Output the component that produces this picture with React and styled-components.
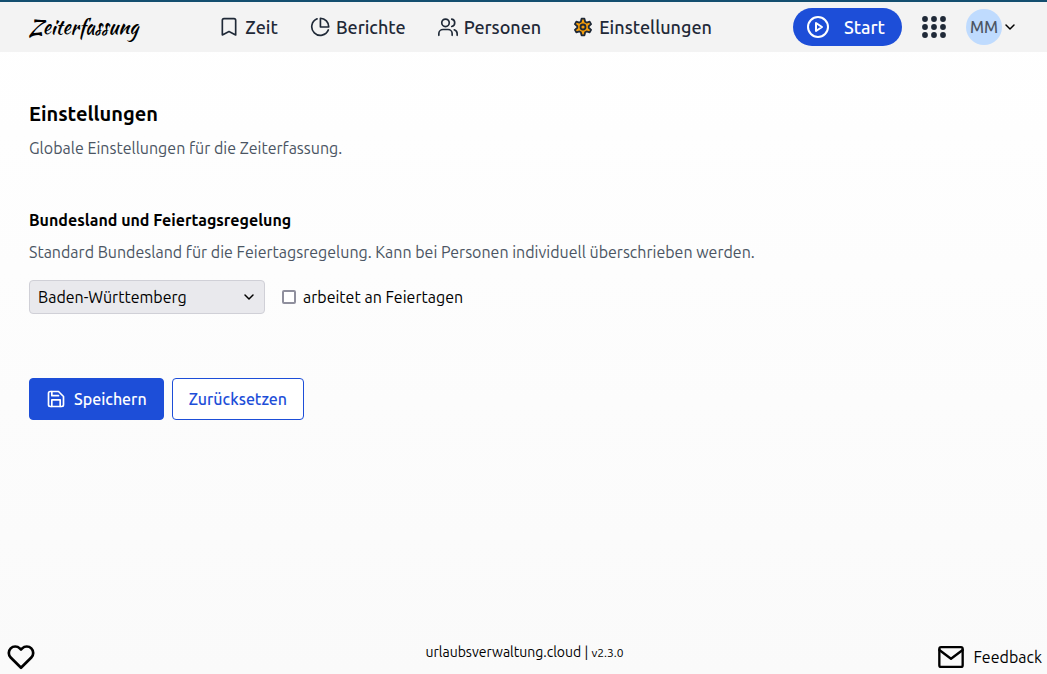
import React from 'react';
import styled, { createGlobalStyle } from 'styled-components';

const GlobalStyle = createGlobalStyle`
  *, *::before, *::after { box-sizing: border-box; }
  body {
    margin: 0;
    font-family: Ubuntu, "Open Sans", "Noto Sans", sans-serif;
    font-size: 16px;
    line-height: 24px;
    color: #000;
  }
  h1, h2, p { margin: 0; }
  button, select, input { font: inherit; color: inherit; }
  a { color: inherit; text-decoration: none; }
  svg { display: block; flex: none; }
`;

const Page = styled.div`
  min-height: 100vh;
  display: flex;
  flex-direction: column;
  background: linear-gradient(#ffffff, #fafafa);
`;

const Header = styled.header`
  height: 52px;
  padding: 0 31px 0 29px;
  display: flex;
  align-items: center;
  justify-content: space-between;
  background: #f3f3f3;
  border-top: 2px solid #134e6f;
`;

const Logo = styled.a`
  font-family: "Kaushan Script", "Liberation Serif", serif;
  font-size: 20px;
`;

const Nav = styled.nav`
  display: flex;
  gap: 32px;
`;

const NavLink = styled.a`
  display: flex;
  align-items: center;
  gap: 6px;
  font-size: 18px;
  font-weight: 500;
  color: #1f2937;
`;

const Actions = styled.div`
  display: flex;
  align-items: center;
  gap: 19px;
`;

const StartButton = styled.button`
  height: 38px;
  padding: 0 17px 0 13px;
  display: flex;
  align-items: center;
  gap: 14px;
  border: 0;
  border-radius: 19px;
  background: #1d4ed8;
  color: #fff;
  font-size: 18px;
  font-weight: 500;
`;

const IconButton = styled.button`
  padding: 0;
  display: flex;
  align-items: center;
  gap: 2px;
  border: 0;
  background: none;
  color: ${({ $color }) => $color || '#000'};
`;

const Avatar = styled.span`
  width: 36px;
  height: 36px;
  display: grid;
  place-items: center;
  border-radius: 50%;
  background: #bfdbfe;
  color: #4b5563;
  font-weight: 500;
`;

const Main = styled.main`
  flex: 1;
  padding: 48px 29px;
`;

const Form = styled.form`
  margin-top: 48px;
`;

const Title = styled.h1`
  font-size: 20px;
  line-height: 28px;
  font-weight: 700;
`;

const Subtitle = styled.h2`
  font-size: 16px;
  font-weight: 700;
`;

const Description = styled.p`
  margin-top: 8px;
  color: #4b5563;
`;

const Row = styled.div`
  display: flex;
  align-items: center;
  gap: ${({ $gap }) => $gap}px;
  margin-top: ${({ $top }) => $top}px;
`;

const SelectBox = styled.div`
  display: grid;
  align-items: center;
  width: 236px;

  & > * { grid-area: 1 / 1; }
  & > svg { justify-self: end; margin-right: 10px; pointer-events: none; }
`;

const Select = styled.select`
  width: 100%;
  height: 34px;
  padding: 0 32px 0 8px;
  appearance: none;
  border: 1px solid #d0d0d7;
  border-radius: 4px;
  background: #e9e9ed;
`;

const CheckLabel = styled.label`
  display: flex;
  align-items: center;
  gap: 7px;
`;

const Checkbox = styled.input`
  width: 14px;
  height: 14px;
  margin: 0;
  appearance: none;
  border: 2px solid #8f8f9d;
  border-radius: 2px;
  background: #fff;
  &:checked { background: #1d4ed8; }
`;

const Button = styled.button`
  height: 42px;
  padding: 0 16px;
  display: flex;
  align-items: center;
  gap: 8px;
  border: 1px solid #1d4ed8;
  border-radius: 4px;
  background: ${({ $primary }) => ($primary ? '#1d4ed8' : '#fff')};
  color: ${({ $primary }) => ($primary ? '#fff' : '#1d4ed8')};
  font-weight: 500;
`;

const Footer = styled.footer`
  display: grid;
  grid-template-columns: 1fr auto 1fr;
  align-items: end;
  padding: 0 5px 3px 7px;
`;

const Version = styled.p`
  padding-bottom: 6px;
  font-size: 14px;
  small { font-size: 12px; }
`;

const Feedback = styled.button`
  justify-self: end;
  display: flex;
  align-items: center;
  gap: 8px;
  padding: 0;
  border: 0;
  background: none;
`;

const Icon = ({ size, stroke = 2, fill = 'none', children }) => (
  <svg
    width={size}
    height={size}
    viewBox="0 0 24 24"
    fill={fill}
    stroke="currentColor"
    strokeWidth={stroke}
    strokeLinecap="round"
    strokeLinejoin="round"
    aria-hidden="true"
  >
    {children}
  </svg>
);

const BookmarkIcon = () => (
  <Icon size={20}>
    <path d="M4 4a2 2 0 0 1 2-2h12a2 2 0 0 1 2 2V21.500l-8-4-8 4z" />
  </Icon>
);

const ChartIcon = () => (
  <Icon size={20}>
    <path d="M8.500 2.200A10.300 10.300 0 1 0 22 15.500" />
    <path d="M12.500 1.500v10.500H22.500A10.300 10.300 0 0 0 12.500 1.500z" />
  </Icon>
);

const PeopleIcon = () => (
  <Icon size={20}>
    <circle cx="9" cy="7" r="4.500" />
    <path d="M1 22v-2a5 5 0 0 1 5-5h6a5 5 0 0 1 5 5v2" />
    <path d="M16.500 2.600a4.500 4.500 0 0 1 0 8.800M19.500 15.300a5 5 0 0 1 3.500 4.700v2" />
  </Icon>
);

const GearIcon = () => (
  <Icon size={20} stroke={2.2}>
    <path
      fill="#f59e0b"
      d="M10.300 2h3.400l.9 3.700 1.700 1 3.700-1.100 1.700 3-2.800 2.500v1.800l2.800 2.500-1.700 3-3.700-1.100-1.700 1-.9 3.700h-3.400l-.9-3.700-1.700-1L4 18.400l-1.700-3 2.800-2.500v-1.800L2.300 8.600l1.700-3 3.700 1.100 1.700-1z"
    />
    <circle cx="12" cy="12" r="3" />
  </Icon>
);

const PlayIcon = () => (
  <Icon size={24}>
    <circle cx="12" cy="12" r="10" />
    <path d="M10 8l6 4-6 4z" />
  </Icon>
);

const AppsIcon = () => (
  <svg width="26" height="24" viewBox="0 0 26 24" fill="currentColor" aria-hidden="true">
    {[4, 12, 20].map((y) => [4, 13, 22].map((x) => <circle key={`${x}-${y}`} cx={x} cy={y} r="2.900" />))}
  </svg>
);

const ChevronIcon = ({ size = 12 }) => (
  <Icon size={size} stroke={3}>
    <path d="M4 8l8 8 8-8" />
  </Icon>
);

const SaveIcon = () => (
  <Icon size={20}>
    <path d="M5 3h10l6 6v10a2 2 0 0 1-2 2H5a2 2 0 0 1-2-2V5a2 2 0 0 1 2-2z" />
    <path d="M7 3v5h8M7 21v-8h10v8" />
  </Icon>
);

const HeartIcon = () => (
  <Icon size={28} stroke={2.3}>
    <path d="M20.840 4.610a5.500 5.500 0 0 0-7.780 0L12 5.670l-1.060-1.060a5.500 5.500 0 0 0-7.780 7.780L12 21.230l8.840-8.840a5.500 5.500 0 0 0 0-7.780z" />
  </Icon>
);

const MailIcon = () => (
  <Icon size={28}>
    <rect x="2" y="3.500" width="20" height="17" rx="1.500" />
    <path d="M2 6l10 7.500L22 6" />
  </Icon>
);

export default function App() {
  return (
    <>
      <GlobalStyle />
      <Page>
        <Header>
          <Logo href="#">Zeiterfassung</Logo>
          <Nav>
            <NavLink href="#zeit"><BookmarkIcon />Zeit</NavLink>
            <NavLink href="#berichte"><ChartIcon />Berichte</NavLink>
            <NavLink href="#personen"><PeopleIcon />Personen</NavLink>
            <NavLink href="#einstellungen" aria-current="page"><GearIcon />Einstellungen</NavLink>
          </Nav>
          <Actions>
            <StartButton type="button"><PlayIcon />Start</StartButton>
            <IconButton type="button" aria-label="Apps" $color="#1f2937"><AppsIcon /></IconButton>
            <IconButton type="button"><Avatar>MM</Avatar><ChevronIcon /></IconButton>
          </Actions>
        </Header>
        <Main>
          <Title>Einstellungen</Title>
          <Description>Globale Einstellungen für die Zeiterfassung.</Description>
          <Form onSubmit={(event) => event.preventDefault()}>
            <Subtitle id="state-title">Bundesland und Feiertagsregelung</Subtitle>
            <Description>
              Standard Bundesland für die Feiertagsregelung. Kann bei Personen individuell überschrieben werden.
            </Description>
            <Row $gap={17} $top={16}>
              <SelectBox>
                <Select aria-labelledby="state-title">
                  <option>Baden-Württemberg</option>
                </Select>
                <ChevronIcon />
              </SelectBox>
              <CheckLabel>
                <Checkbox type="checkbox" />
                arbeitet an Feiertagen
              </CheckLabel>
            </Row>
            <Row $gap={8} $top={64}>
              <Button type="submit" $primary><SaveIcon />Speichern</Button>
              <Button type="reset">Zurücksetzen</Button>
            </Row>
          </Form>
        </Main>
        <Footer>
          <IconButton type="button" aria-label="Danke"><HeartIcon /></IconButton>
          <Version><a href="#cloud">urlaubsverwaltung.cloud</a> | <small>v2.3.0</small></Version>
          <Feedback type="button"><MailIcon />Feedback</Feedback>
        </Footer>
      </Page>
    </>
  );
}
